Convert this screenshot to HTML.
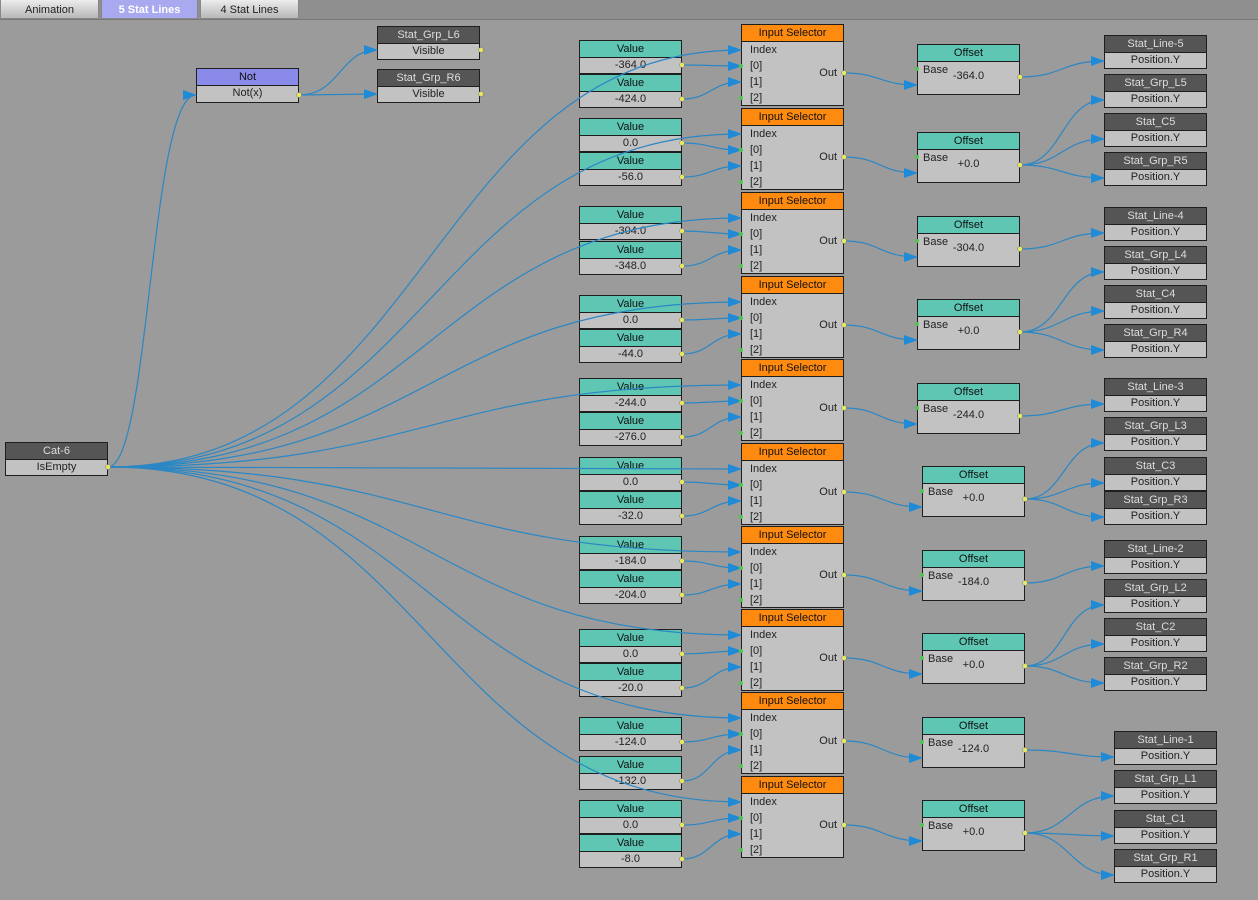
<!DOCTYPE html>
<html><head><meta charset="utf-8"><style>
body{margin:0;width:1258px;height:900px;overflow:hidden;background:#9b9b9b;font-family:"Liberation Sans",sans-serif;font-size:11px;position:relative}
.bar{position:absolute;left:0;top:0;width:1258px;height:19px;background:#8f8f8f;border-bottom:1px solid #777}
.tab{position:absolute;top:0;height:19px;line-height:20px;text-align:center;color:#222;background:linear-gradient(#ececec,#b8b8b8);border:1px solid #888;border-top:none;box-sizing:border-box;font-size:11px}
.tab.on{background:#a9a9ef;color:#fff;font-weight:bold}
.n{position:absolute;width:103px;border:1px solid #1e1e1e;box-sizing:border-box;background:#c2c2c2;color:#222;text-align:center}
.h{height:16px;line-height:16px;border-bottom:1px solid #1e1e1e}
.r{height:15px;line-height:15px}
.d .h{background:#555;color:#ddd}
.v .h{background:#5ec6b3;color:#111}
.v{height:34px}
.s .h{background:#ff8a10;color:#111}
.s{height:82px;text-align:left}
.s .r{padding-left:8px;height:16px;line-height:16px}
.s .o{position:absolute;right:6px;top:42px}
.of .h{background:#5ec6b3;color:#111}
.of{height:51px}
.of .b{position:absolute;left:5px;top:19px;text-align:left}
.of .val{position:absolute;left:0;right:0;top:25px}
.d{height:34px}
svg{position:absolute;left:0;top:0}
</style></head><body>
<div class="bar"></div>
<div class="tab" style="left:0;width:99px">Animation</div>
<div class="tab on" style="left:101px;width:97px">5 Stat Lines</div>
<div class="tab" style="left:200px;width:99px">4 Stat Lines</div>

<div class="n d" style="left:5px;top:442px"><div class="h">Cat-6</div><div class="r">IsEmpty</div></div>
<div class="n" style="left:196px;top:68px;height:35px"><div class="h" style="background:#8a8ae8;color:#111">Not</div><div class="r">Not(x)</div></div>
<div class="n d" style="left:377px;top:26px"><div class="h">Stat_Grp_L6</div><div class="r">Visible</div></div>
<div class="n d" style="left:377px;top:69px"><div class="h">Stat_Grp_R6</div><div class="r">Visible</div></div>

<!-- values -->
<div class="n v" style="left:579px;top:40px"><div class="h">Value</div><div class="r">-364.0</div></div>
<div class="n v" style="left:579px;top:74px"><div class="h">Value</div><div class="r">-424.0</div></div>
<div class="n v" style="left:579px;top:118px"><div class="h">Value</div><div class="r">0.0</div></div>
<div class="n v" style="left:579px;top:152px"><div class="h">Value</div><div class="r">-56.0</div></div>
<div class="n v" style="left:579px;top:206px"><div class="h">Value</div><div class="r">-304.0</div></div>
<div class="n v" style="left:579px;top:241px"><div class="h">Value</div><div class="r">-348.0</div></div>
<div class="n v" style="left:579px;top:295px"><div class="h">Value</div><div class="r">0.0</div></div>
<div class="n v" style="left:579px;top:329px"><div class="h">Value</div><div class="r">-44.0</div></div>
<div class="n v" style="left:579px;top:378px"><div class="h">Value</div><div class="r">-244.0</div></div>
<div class="n v" style="left:579px;top:412px"><div class="h">Value</div><div class="r">-276.0</div></div>
<div class="n v" style="left:579px;top:457px"><div class="h">Value</div><div class="r">0.0</div></div>
<div class="n v" style="left:579px;top:491px"><div class="h">Value</div><div class="r">-32.0</div></div>
<div class="n v" style="left:579px;top:536px"><div class="h">Value</div><div class="r">-184.0</div></div>
<div class="n v" style="left:579px;top:570px"><div class="h">Value</div><div class="r">-204.0</div></div>
<div class="n v" style="left:579px;top:629px"><div class="h">Value</div><div class="r">0.0</div></div>
<div class="n v" style="left:579px;top:663px"><div class="h">Value</div><div class="r">-20.0</div></div>
<div class="n v" style="left:579px;top:717px"><div class="h">Value</div><div class="r">-124.0</div></div>
<div class="n v" style="left:579px;top:756px"><div class="h">Value</div><div class="r">-132.0</div></div>
<div class="n v" style="left:579px;top:800px"><div class="h">Value</div><div class="r">0.0</div></div>
<div class="n v" style="left:579px;top:834px"><div class="h">Value</div><div class="r">-8.0</div></div>

<!-- selectors -->
<div class="n s" style="left:741px;top:24px"><div class="h" style="text-align:center">Input Selector</div><div class="r">Index</div><div class="r">[0]</div><div class="r">[1]</div><div class="r">[2]</div><span class="o">Out</span></div>
<div class="n s" style="left:741px;top:108px"><div class="h" style="text-align:center">Input Selector</div><div class="r">Index</div><div class="r">[0]</div><div class="r">[1]</div><div class="r">[2]</div><span class="o">Out</span></div>
<div class="n s" style="left:741px;top:192px"><div class="h" style="text-align:center">Input Selector</div><div class="r">Index</div><div class="r">[0]</div><div class="r">[1]</div><div class="r">[2]</div><span class="o">Out</span></div>
<div class="n s" style="left:741px;top:276px"><div class="h" style="text-align:center">Input Selector</div><div class="r">Index</div><div class="r">[0]</div><div class="r">[1]</div><div class="r">[2]</div><span class="o">Out</span></div>
<div class="n s" style="left:741px;top:359px"><div class="h" style="text-align:center">Input Selector</div><div class="r">Index</div><div class="r">[0]</div><div class="r">[1]</div><div class="r">[2]</div><span class="o">Out</span></div>
<div class="n s" style="left:741px;top:443px"><div class="h" style="text-align:center">Input Selector</div><div class="r">Index</div><div class="r">[0]</div><div class="r">[1]</div><div class="r">[2]</div><span class="o">Out</span></div>
<div class="n s" style="left:741px;top:526px"><div class="h" style="text-align:center">Input Selector</div><div class="r">Index</div><div class="r">[0]</div><div class="r">[1]</div><div class="r">[2]</div><span class="o">Out</span></div>
<div class="n s" style="left:741px;top:609px"><div class="h" style="text-align:center">Input Selector</div><div class="r">Index</div><div class="r">[0]</div><div class="r">[1]</div><div class="r">[2]</div><span class="o">Out</span></div>
<div class="n s" style="left:741px;top:692px"><div class="h" style="text-align:center">Input Selector</div><div class="r">Index</div><div class="r">[0]</div><div class="r">[1]</div><div class="r">[2]</div><span class="o">Out</span></div>
<div class="n s" style="left:741px;top:776px"><div class="h" style="text-align:center">Input Selector</div><div class="r">Index</div><div class="r">[0]</div><div class="r">[1]</div><div class="r">[2]</div><span class="o">Out</span></div>

<!-- offsets -->
<div class="n of" style="left:917px;top:44px"><div class="h">Offset</div><span class="b">Base</span><span class="val">-364.0</span></div>
<div class="n of" style="left:917px;top:132px"><div class="h">Offset</div><span class="b">Base</span><span class="val">+0.0</span></div>
<div class="n of" style="left:917px;top:216px"><div class="h">Offset</div><span class="b">Base</span><span class="val">-304.0</span></div>
<div class="n of" style="left:917px;top:299px"><div class="h">Offset</div><span class="b">Base</span><span class="val">+0.0</span></div>
<div class="n of" style="left:917px;top:383px"><div class="h">Offset</div><span class="b">Base</span><span class="val">-244.0</span></div>
<div class="n of" style="left:922px;top:466px"><div class="h">Offset</div><span class="b">Base</span><span class="val">+0.0</span></div>
<div class="n of" style="left:922px;top:550px"><div class="h">Offset</div><span class="b">Base</span><span class="val">-184.0</span></div>
<div class="n of" style="left:922px;top:633px"><div class="h">Offset</div><span class="b">Base</span><span class="val">+0.0</span></div>
<div class="n of" style="left:922px;top:717px"><div class="h">Offset</div><span class="b">Base</span><span class="val">-124.0</span></div>
<div class="n of" style="left:922px;top:800px"><div class="h">Offset</div><span class="b">Base</span><span class="val">+0.0</span></div>

<!-- outputs -->
<div class="n d" style="left:1104px;top:35px"><div class="h">Stat_Line-5</div><div class="r">Position.Y</div></div>
<div class="n d" style="left:1104px;top:74px"><div class="h">Stat_Grp_L5</div><div class="r">Position.Y</div></div>
<div class="n d" style="left:1104px;top:113px"><div class="h">Stat_C5</div><div class="r">Position.Y</div></div>
<div class="n d" style="left:1104px;top:152px"><div class="h">Stat_Grp_R5</div><div class="r">Position.Y</div></div>
<div class="n d" style="left:1104px;top:207px"><div class="h">Stat_Line-4</div><div class="r">Position.Y</div></div>
<div class="n d" style="left:1104px;top:246px"><div class="h">Stat_Grp_L4</div><div class="r">Position.Y</div></div>
<div class="n d" style="left:1104px;top:285px"><div class="h">Stat_C4</div><div class="r">Position.Y</div></div>
<div class="n d" style="left:1104px;top:324px"><div class="h">Stat_Grp_R4</div><div class="r">Position.Y</div></div>
<div class="n d" style="left:1104px;top:378px"><div class="h">Stat_Line-3</div><div class="r">Position.Y</div></div>
<div class="n d" style="left:1104px;top:417px"><div class="h">Stat_Grp_L3</div><div class="r">Position.Y</div></div>
<div class="n d" style="left:1104px;top:457px"><div class="h">Stat_C3</div><div class="r">Position.Y</div></div>
<div class="n d" style="left:1104px;top:491px"><div class="h">Stat_Grp_R3</div><div class="r">Position.Y</div></div>
<div class="n d" style="left:1104px;top:540px"><div class="h">Stat_Line-2</div><div class="r">Position.Y</div></div>
<div class="n d" style="left:1104px;top:579px"><div class="h">Stat_Grp_L2</div><div class="r">Position.Y</div></div>
<div class="n d" style="left:1104px;top:618px"><div class="h">Stat_C2</div><div class="r">Position.Y</div></div>
<div class="n d" style="left:1104px;top:657px"><div class="h">Stat_Grp_R2</div><div class="r">Position.Y</div></div>
<div class="n d" style="left:1114px;top:731px"><div class="h">Stat_Line-1</div><div class="r">Position.Y</div></div>
<div class="n d" style="left:1114px;top:770px"><div class="h">Stat_Grp_L1</div><div class="r">Position.Y</div></div>
<div class="n d" style="left:1114px;top:810px"><div class="h">Stat_C1</div><div class="r">Position.Y</div></div>
<div class="n d" style="left:1114px;top:849px"><div class="h">Stat_Grp_R1</div><div class="r">Position.Y</div></div>

<svg width="1258" height="900" viewBox="0 0 1258 900">
<defs><marker id="a" markerUnits="userSpaceOnUse" markerWidth="14" markerHeight="10" refX="13" refY="5" orient="auto"><path d="M0 0L14 5L0 10z" fill="#1f8ad6"/></marker></defs>
<g fill="none" stroke="#2b87c4" stroke-width="1.2" marker-end="url(#a)">
<path d="M108 467C150 467 150 95 196 95"/>
<path d="M108 467C430 467 430 50 741 50"/>
<path d="M108 467C430 467 430 134 741 134"/>
<path d="M108 467C430 467 430 218 741 218"/>
<path d="M108 467C430 467 430 302 741 302"/>
<path d="M108 467C430 467 430 385 741 385"/>
<path d="M108 467C430 467 430 469 741 469"/>
<path d="M108 467C430 467 430 552 741 552"/>
<path d="M108 467C430 467 430 635 741 635"/>
<path d="M108 467C430 467 430 718 741 718"/>
<path d="M108 467C430 467 430 802 741 802"/>
<path d="M299 95C340 95 340 50 377 50"/>
<path d="M299 95L377 94"/>
<path d="M682 65C711 65 711 66 741 66"/><path d="M682 99C711 99 711 82 741 82"/>
<path d="M682 143C711 143 711 150 741 150"/><path d="M682 177C711 177 711 166 741 166"/>
<path d="M682 231C711 231 711 234 741 234"/><path d="M682 266C711 266 711 250 741 250"/>
<path d="M682 320C711 320 711 318 741 318"/><path d="M682 354C711 354 711 334 741 334"/>
<path d="M682 403C711 403 711 401 741 401"/><path d="M682 437C711 437 711 417 741 417"/>
<path d="M682 482C711 482 711 485 741 485"/><path d="M682 516C711 516 711 501 741 501"/>
<path d="M682 561C711 561 711 568 741 568"/><path d="M682 595C711 595 711 584 741 584"/>
<path d="M682 654C711 654 711 651 741 651"/><path d="M682 688C711 688 711 667 741 667"/>
<path d="M682 742C711 742 711 734 741 734"/><path d="M682 781C711 781 711 750 741 750"/>
<path d="M682 825C711 825 711 818 741 818"/><path d="M682 859C711 859 711 834 741 834"/>
<path d="M844 73C880 73 880 85 917 85"/>
<path d="M844 157C880 157 880 173 917 173"/>
<path d="M844 241C880 241 880 257 917 257"/>
<path d="M844 325C880 325 880 340 917 340"/>
<path d="M844 408C880 408 880 424 917 424"/>
<path d="M844 492C883 492 883 507 922 507"/>
<path d="M844 575C883 575 883 591 922 591"/>
<path d="M844 658C883 658 883 674 922 674"/>
<path d="M844 741C883 741 883 758 922 758"/>
<path d="M844 825C883 825 883 841 922 841"/>
<path d="M1020 77C1062 77 1062 61 1104 61"/>
<path d="M1020 165C1062 165 1062 100 1104 100"/><path d="M1020 165C1062 165 1062 139 1104 139"/><path d="M1020 165C1062 165 1062 178 1104 178"/>
<path d="M1020 249C1062 249 1062 233 1104 233"/>
<path d="M1020 332C1062 332 1062 272 1104 272"/><path d="M1020 332C1062 332 1062 311 1104 311"/><path d="M1020 332C1062 332 1062 350 1104 350"/>
<path d="M1020 416C1062 416 1062 404 1104 404"/>
<path d="M1025 499C1064 499 1064 443 1104 443"/><path d="M1025 499C1064 499 1064 483 1104 483"/><path d="M1025 499C1064 499 1064 517 1104 517"/>
<path d="M1025 583C1064 583 1064 566 1104 566"/>
<path d="M1025 666C1064 666 1064 605 1104 605"/><path d="M1025 666C1064 666 1064 644 1104 644"/><path d="M1025 666C1064 666 1064 683 1104 683"/>
<path d="M1025 750C1070 750 1070 757 1114 757"/>
<path d="M1025 833C1070 833 1070 796 1114 796"/><path d="M1025 833C1070 833 1070 836 1114 836"/><path d="M1025 833C1070 833 1070 875 1114 875"/>
</g>
<g fill="#e8e860" stroke="#777" stroke-width="0.5">
<circle cx="108" cy="467" r="2.5"/><circle cx="299" cy="95" r="2.5"/><circle cx="481" cy="50" r="2.5"/><circle cx="481" cy="94" r="2.5"/>
<circle cx="682" cy="65" r="2.5"/><circle cx="682" cy="99" r="2.5"/><circle cx="682" cy="143" r="2.5"/><circle cx="682" cy="177" r="2.5"/>
<circle cx="682" cy="231" r="2.5"/><circle cx="682" cy="266" r="2.5"/><circle cx="682" cy="320" r="2.5"/><circle cx="682" cy="354" r="2.5"/>
<circle cx="682" cy="403" r="2.5"/><circle cx="682" cy="437" r="2.5"/><circle cx="682" cy="482" r="2.5"/><circle cx="682" cy="516" r="2.5"/>
<circle cx="682" cy="561" r="2.5"/><circle cx="682" cy="595" r="2.5"/><circle cx="682" cy="654" r="2.5"/><circle cx="682" cy="688" r="2.5"/>
<circle cx="682" cy="742" r="2.5"/><circle cx="682" cy="781" r="2.5"/><circle cx="682" cy="825" r="2.5"/><circle cx="682" cy="859" r="2.5"/>
<circle cx="844" cy="73" r="2.5"/><circle cx="844" cy="157" r="2.5"/><circle cx="844" cy="241" r="2.5"/><circle cx="844" cy="325" r="2.5"/><circle cx="844" cy="408" r="2.5"/>
<circle cx="844" cy="492" r="2.5"/><circle cx="844" cy="575" r="2.5"/><circle cx="844" cy="658" r="2.5"/><circle cx="844" cy="741" r="2.5"/><circle cx="844" cy="825" r="2.5"/>
<circle cx="1020" cy="77" r="2.5"/><circle cx="1020" cy="165" r="2.5"/><circle cx="1020" cy="249" r="2.5"/><circle cx="1020" cy="332" r="2.5"/><circle cx="1020" cy="416" r="2.5"/>
<circle cx="1025" cy="499" r="2.5"/><circle cx="1025" cy="583" r="2.5"/><circle cx="1025" cy="666" r="2.5"/><circle cx="1025" cy="750" r="2.5"/><circle cx="1025" cy="833" r="2.5"/>
</g>
<g fill="#4cc84c">
<circle cx="741" cy="66" r="2"/><circle cx="741" cy="98" r="2"/><circle cx="741" cy="150" r="2"/><circle cx="741" cy="182" r="2"/>
<circle cx="741" cy="234" r="2"/><circle cx="741" cy="266" r="2"/><circle cx="741" cy="318" r="2"/><circle cx="741" cy="350" r="2"/>
<circle cx="741" cy="401" r="2"/><circle cx="741" cy="433" r="2"/><circle cx="741" cy="485" r="2"/><circle cx="741" cy="517" r="2"/>
<circle cx="741" cy="568" r="2"/><circle cx="741" cy="600" r="2"/><circle cx="741" cy="651" r="2"/><circle cx="741" cy="683" r="2"/>
<circle cx="741" cy="734" r="2"/><circle cx="741" cy="766" r="2"/><circle cx="741" cy="818" r="2"/><circle cx="741" cy="850" r="2"/>
<circle cx="917" cy="69" r="2"/><circle cx="917" cy="157" r="2"/><circle cx="917" cy="241" r="2"/><circle cx="917" cy="324" r="2"/><circle cx="917" cy="408" r="2"/>
<circle cx="922" cy="491" r="2"/><circle cx="922" cy="575" r="2"/><circle cx="922" cy="658" r="2"/><circle cx="922" cy="742" r="2"/><circle cx="922" cy="825" r="2"/>
</g>
</svg>
</body></html>
